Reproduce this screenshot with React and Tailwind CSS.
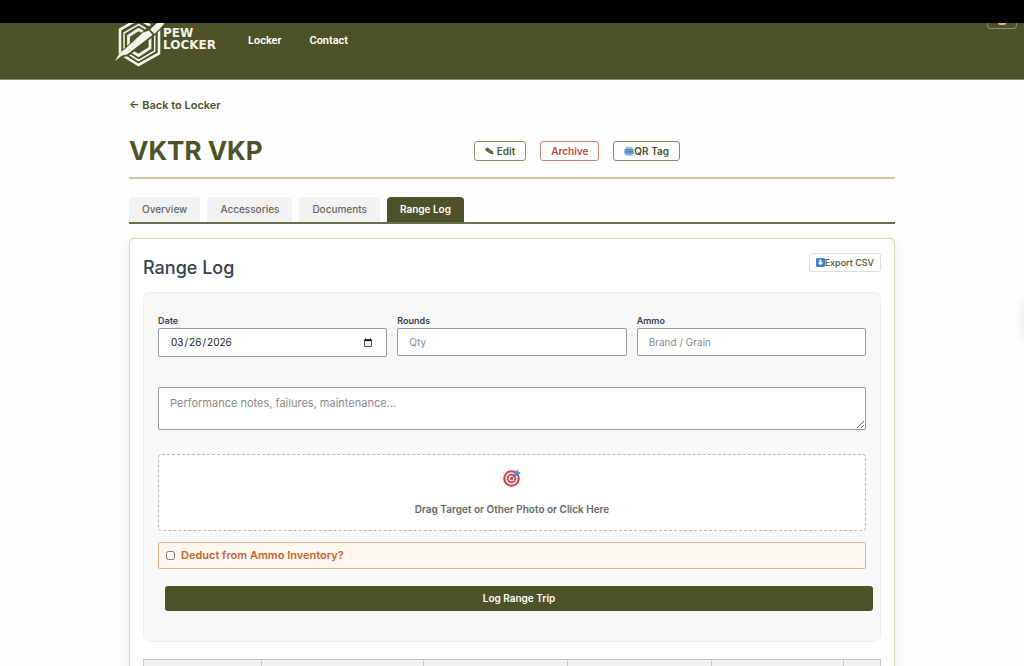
import * as React from 'react';

const tabs = ['Overview', 'Accessories', 'Documents', 'Range Log'];

function Logo() {
  return (
    <a href="#" className="flex items-start text-[#f4f4e8]" aria-label="Pew Locker">
      <svg width="50" height="44" viewBox="114 23 50 44" fill="none" stroke="currentColor">
        <path d="M138.500 19 159 30.500V53.500L138.500 65 120 53.500V29.500Z" strokeWidth="2.600" />
        <path d="M138.500 24.500 154.700 34V51L138.500 60.500 124 51V33Z" strokeWidth="1.500" />
        <path d="M144 32.500 138.500 29.500 128.500 36V49" strokeWidth="2.800" />
        <path d="M150 37V48L138.500 55.500 132 51.500" strokeWidth="2.800" />
        <path d="M115 59 123 50 146 29 158 20 166 23 156 34 129 55Z" fill="#4d5228" stroke="#4d5228" strokeWidth="1" />
        <path d="M115 61 120 52.500 125 49 143 32.500 149 30.500 152.500 35 127 54.500 122 55.500Z" fill="currentColor" stroke="none" />
        <path d="M150 29.500 157 23H165L160.500 28 154.500 34Z" fill="currentColor" stroke="none" />
      </svg>
      <span className="flex flex-col pt-1 -ml-px font-['DejaVu_Sans',sans-serif] text-[12px] leading-3 font-bold">
        <span>PEW</span>
        <span>LOCKER</span>
      </span>
    </a>
  );
}

function PencilIcon() {
  return (
    <svg width="9" height="8" viewBox="0 0 9 8">
      <path d="M0.500 1.500 2.800 0.500 7.800 4.300 8.500 7.200 5.600 6.800 0.600 3.600Z" fill="#4d5228" />
      <path d="M2 2.500 6.300 5.500M3 1.500 7 4.500" stroke="#b9bba6" strokeWidth="0.500" />
    </svg>
  );
}

function PrinterIcon() {
  return (
    <svg width="10" height="10" viewBox="0 0 10 10">
      <rect x="1.500" y="0.500" width="7" height="3.500" fill="#9cc6ea" />
      <rect x="0.500" y="3" width="9" height="5" rx="1" fill="#4c83bd" />
      <rect x="1" y="4" width="8" height="1" fill="#76a9da" />
      <rect x="1.500" y="6.500" width="7" height="3" fill="#74a9dc" />
    </svg>
  );
}

function DownloadIcon() {
  return (
    <svg width="9" height="9" viewBox="0 0 9 9">
      <rect width="9" height="9" rx="1" fill="#3e86c2" />
      <path d="M3.600 1.500H5.400V4.300H7.200L4.500 7.300 1.800 4.300H3.600Z" fill="#fff" />
    </svg>
  );
}

function TargetIcon() {
  return (
    <svg width="18" height="18" viewBox="0 0 18 18">
      <circle cx="8.500" cy="9.500" r="8.300" fill="#c8404a" />
      <circle cx="8.500" cy="9.500" r="6.300" fill="#f3e9ea" />
      <circle cx="8.500" cy="9.500" r="4.700" fill="#c8404a" />
      <circle cx="8.500" cy="9.500" r="2.900" fill="#f3e9ea" />
      <circle cx="8.500" cy="9.500" r="1.500" fill="#c8404a" />
      <path d="M8.500 9.500 13 5" stroke="#4b5563" strokeWidth="1" />
      <path d="M10.800 7.200 11.500 3.500 14.500 0.500 15.300 2.700 17.700 3.500 14.700 6.500Z" fill="#4a90d0" />
    </svg>
  );
}

function Field({ id, label, children }) {
  return (
    <div className="flex flex-col flex-1 min-w-0">
      <label htmlFor={id} className="text-[9px] leading-[14px] font-semibold text-[#374151]">
        {label}
      </label>
      {children}
    </div>
  );
}

function App() {
  const [tab, setTab] = React.useState('Range Log');
  const [deduct, setDeduct] = React.useState(false);

  return (
    <div className="relative h-screen overflow-hidden bg-[#fefefe] font-['Inter',sans-serif] text-[#374151]">
      <div className="h-[23px] bg-black" />
      <header className="relative h-[57px] bg-[#4d5228] border-b border-[#8b8f70]">
        <div className="flex items-start max-w-[796px] mx-auto">
          <Logo />
          <nav className="flex gap-7 pt-[9px] ml-8 font-['Roboto',sans-serif] text-[11px] leading-[18px] font-semibold text-white">
            <a href="#">Locker</a>
            <a href="#">Contact</a>
          </nav>
        </div>
        <button
          type="button"
          aria-label="Menu"
          className="absolute top-0 right-[7px] flex justify-center w-[30px] h-[6px] rounded-b-sm border border-t-0 border-[#8b8f70]"
        >
          <span className="w-2 h-[2px] rounded-b-full bg-[#e5b673]" />
        </button>
      </header>

      <main className="max-w-[766px] mx-auto pt-4">
        <a href="#" className="block text-[11px] leading-[18px] font-semibold text-[#4d5228]">
          ← Back to Locker
        </a>

        <div className="flex items-center justify-between mt-5 pb-[10px] h-[45px] border-b-2 border-[#d0c9a8]">
          <h1 className="text-[26px] leading-9 font-bold text-[#4d5228]">VKTR VKP</h1>
          <div className="flex gap-[14px] mr-[215px] text-[10px] leading-[18px] font-semibold">
            <button type="button" className="flex items-center gap-[3px] px-[10px] rounded-[3px] border border-[#868a6c] text-[#4d5228] bg-white">
              <PencilIcon />
              Edit
            </button>
            <button type="button" className="px-[10px] rounded-[3px] border border-[#c97e76] text-[#b84a42] bg-white">
              Archive
            </button>
            <button type="button" className="flex items-center px-[10px] rounded-[3px] border border-[#868a6c] text-[#4d5228] bg-white">
              <PrinterIcon />
              QR Tag
            </button>
          </div>
        </div>

        <div className="flex gap-[7px] mt-[18px] border-b-2 border-[#6b7049]">
          {tabs.map((name) => (
            <button
              key={name}
              type="button"
              onClick={() => setTab(name)}
              className={
                name === tab
                  ? 'px-[13px] text-[10px] leading-[25px] font-semibold rounded-t-[4px] bg-[#4d5228] text-white'
                  : 'px-[13px] text-[10px] leading-[25px] font-medium rounded-t-[4px] bg-[#f2f2f2] text-[#666]'
              }
            >
              {name}
            </button>
          ))}
        </div>

        <section className="mt-[14px] h-[600px] px-[13px] pt-[14px] rounded-[5px] border border-[#d6d0b4] bg-white shadow-[0_3px_12px_rgba(75,81,39,0.12)]">
          <div className="flex items-start justify-between">
            <h2 className="text-[18px] leading-[30px] font-medium">Range Log</h2>
            <button type="button" className="flex items-center px-[6px] text-[9px] leading-[17px] font-medium rounded-[3px] border border-[#dcdcdc] text-[#4d5228] bg-white">
              <DownloadIcon />
              Export CSV
            </button>
          </div>

          <form className="mt-[9px] px-[14px] pt-[21px] pb-[30px] rounded-[7px] border border-[#f0f0f0] bg-[#f8f8f8]" onSubmit={(e) => e.preventDefault()}>
            <div className="flex items-start gap-[10px]">
              <Field id="date" label="Date">
                <input
                  id="date"
                  type="date"
                  defaultValue="2026-03-26"
                  className="w-full h-[29px] px-[11px] text-[10px] text-[#222] bg-white border border-[#9a9a9a] rounded-[2px]"
                />
              </Field>
              <Field id="rounds" label="Rounds">
                <input
                  id="rounds"
                  type="text"
                  placeholder="Qty"
                  className="w-full h-7 px-[11px] text-[10px] placeholder:text-[#8a8a8a] bg-white border border-[#9a9a9a] rounded-[2px]"
                />
              </Field>
              <Field id="ammo" label="Ammo">
                <input
                  id="ammo"
                  type="text"
                  placeholder="Brand / Grain"
                  className="w-full h-7 px-[11px] text-[10px] placeholder:text-[#8a8a8a] bg-white border border-[#9a9a9a] rounded-[2px]"
                />
              </Field>
            </div>

            <textarea
              aria-label="Notes"
              placeholder="Performance notes, failures, maintenance..."
              className="block w-full h-[43px] mt-[30px] px-[11px] py-[7px] text-[11px] leading-4 placeholder:text-[#8a8a8a] bg-white border border-[#9a9a9a] rounded-[2px]"
            />

            <button
              type="button"
              className="flex flex-col items-center w-full h-[77px] mt-6 pt-[14px] rounded-[4px] border border-dashed border-[#b8b8b8] bg-white text-[10px] leading-4 font-semibold text-[#666]"
            >
              <TargetIcon />
              <span className="mt-[14px]">Drag Target or Other Photo or Click Here</span>
            </button>

            <label className="flex items-center gap-[6px] h-[27px] mt-[11px] px-[7px] rounded-[2px] border border-[#e0b491] bg-[#fff6ee] text-[11px] font-semibold text-[#bd6636]">
              <input
                type="checkbox"
                checked={deduct}
                onChange={(e) => setDeduct(e.target.checked)}
                className="w-[9px] h-[9px]"
              />
              Deduct from Ammo Inventory?
            </label>

            <button
              type="submit"
              className="w-full mt-[17px] ml-[7px] text-[10px] leading-[25px] font-semibold rounded-[3px] bg-[#4d5228] text-white"
            >
              Log Range Trip
            </button>
          </form>

          <table className="w-full mt-[17px] table-fixed border-collapse bg-[#f2f2f2]">
            <thead>
              <tr className="h-7">
                <th className="w-[16%] border border-[#c8c8c8]" />
                <th className="w-[22%] border border-[#c8c8c8]" />
                <th className="border border-[#c8c8c8]" />
                <th className="border border-[#c8c8c8]" />
                <th className="w-[18%] border border-[#c8c8c8]" />
                <th className="w-[5%] border border-[#c8c8c8]" />
              </tr>
            </thead>
          </table>
        </section>
      </main>

      <div className="absolute top-[300px] left-full w-12 h-10 rounded-lg bg-white shadow-[0_0_12px_rgba(0,0,0,0.12)]" />
    </div>
  );
}

export default App;
